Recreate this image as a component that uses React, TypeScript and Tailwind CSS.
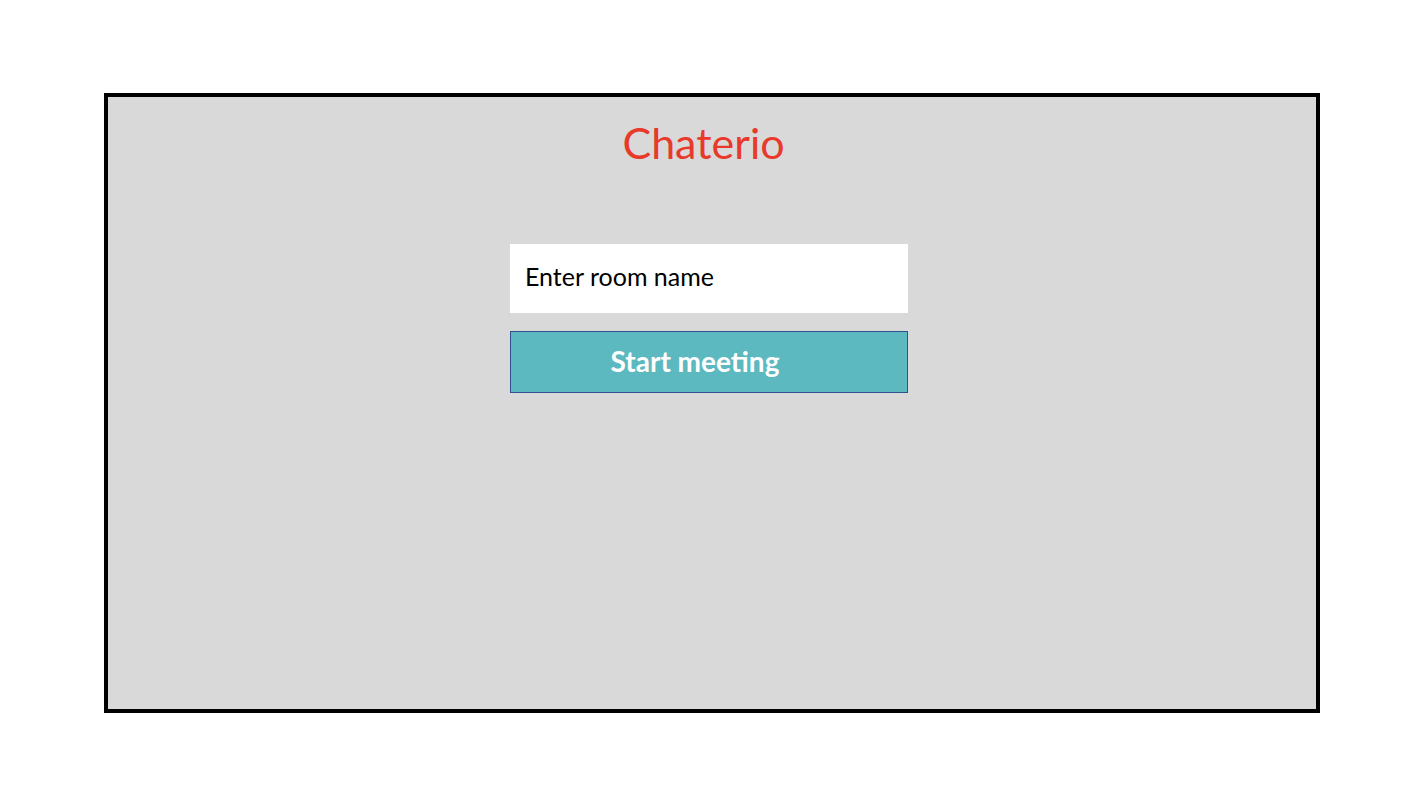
import React from 'react';

const App: React.FC = () => {
  return (
    <div className="w-[1406px] h-[786px] bg-white pt-[93px] pl-[104px] font-['Lato',sans-serif]">
      <div className="w-[1216px] h-[620px] border-4 border-black bg-[#d9d9d9] flex flex-col items-center">
        {/* Title */}
        <h1 className="mt-[16px] ml-[-17px] text-[43px] leading-[60px] text-[#e8392b]">Chaterio</h1>

        {/* Room form */}
        <div className="mt-[71px] ml-[-6px] flex flex-col gap-[18px]">
          <input
            type="text"
            placeholder="Enter room name"
            className="w-[398px] h-[69px] bg-white px-[15px] pb-[5px] text-[25px] text-black placeholder:text-black outline-none"
          />
          <button className="w-[398px] h-[62px] bg-[#5db9c0] border border-[#2f528f] text-white text-[28px] font-bold pr-[28px] pb-[2px]">
            Start meeting
          </button>
        </div>
      </div>
    </div>
  );
};

export default App;
